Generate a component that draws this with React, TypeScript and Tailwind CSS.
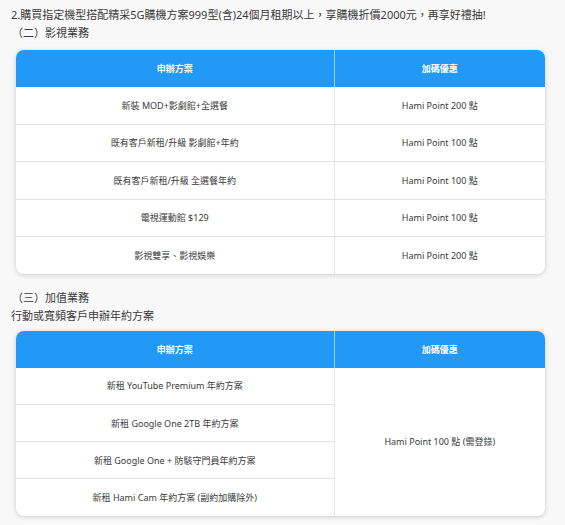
import React from "react"

const font = { fontFamily: '"Noto Sans", "Noto Sans CJK TC", sans-serif' }

const videoRows = [
  { plan: "新裝 MOD+影劇館+全選餐", bonus: "Hami Point 200 點" },
  { plan: "既有客戶新租/升級 影劇館+年約", bonus: "Hami Point 100 點" },
  { plan: "既有客戶新租/升級 全選餐年約", bonus: "Hami Point 100 點" },
  { plan: "電視運動館 $129", bonus: "Hami Point 100 點" },
  { plan: "影視雙享、影視娛樂", bonus: "Hami Point 200 點" },
]

const valueRows = [
  "新租 YouTube Premium 年約方案",
  "新租 Google One 2TB 年約方案",
  "新租 Google One + 防駭守門員年約方案",
  "新租 Hami Cam 年約方案 (副約加購除外)",
]

function Head() {
  return (
    <thead>
      <tr className="h-[37px] bg-[#2299f6] text-white text-[9px] font-bold">
        <th className="w-[318px] border-r border-[#9fd0fb]">申辦方案</th>
        <th>加碼優惠</th>
      </tr>
    </thead>
  )
}

export default function App() {
  return (
    <div className="min-h-[525px] w-[565px] bg-[#f8f8f8] text-[#3a3a3a] px-[11px] pt-[6px]" style={font}>
      <p className="text-[11px] leading-[18px]">
        2.購買指定機型搭配精采5G購機方案999型(含)24個月租期以上，享購機折價2000元，再享好禮抽!
      </p>
      <p className="text-[11px] leading-[18px] pl-[1px]">（二）影視業務</p>

      <div className="mt-[8px] ml-[5px] w-[529px] rounded-lg overflow-hidden bg-white shadow-[0_1px_5px_rgba(0,0,0,0.18)]">
        <table className="w-full border-collapse text-[9px] text-center">
          <Head />
          <tbody>
            {videoRows.map((r, i) => (
              <tr key={i} className={`h-[37.4px] ${i > 0 ? "border-t border-[#e4e4e4]" : ""}`}>
                <td className="border-r border-[#e4e4e4]">{r.plan}</td>
                <td>{r.bonus}</td>
              </tr>
            ))}
          </tbody>
        </table>
      </div>

      <p className="mt-[15px] text-[11px] leading-[18px] pl-[1px]">（三）加值業務</p>
      <p className="text-[11px] leading-[18px]">行動或寬頻客戶申辦年約方案</p>

      <div className="mt-[6px] ml-[5px] w-[529px] rounded-lg overflow-hidden bg-white shadow-[0_1px_5px_rgba(0,0,0,0.18)]">
        <table className="w-full border-collapse text-[9px] text-center">
          <Head />
          <tbody>
            {valueRows.map((plan, i) => (
              <tr key={i} className={`h-[37px] ${i > 0 ? "border-t border-[#e4e4e4]" : ""}`}>
                <td className="border-r border-[#e4e4e4]">{plan}</td>
                {i === 0 && <td rowSpan={4}>Hami Point 100 點 (需登錄)</td>}
              </tr>
            ))}
          </tbody>
        </table>
      </div>
    </div>
  )
}
